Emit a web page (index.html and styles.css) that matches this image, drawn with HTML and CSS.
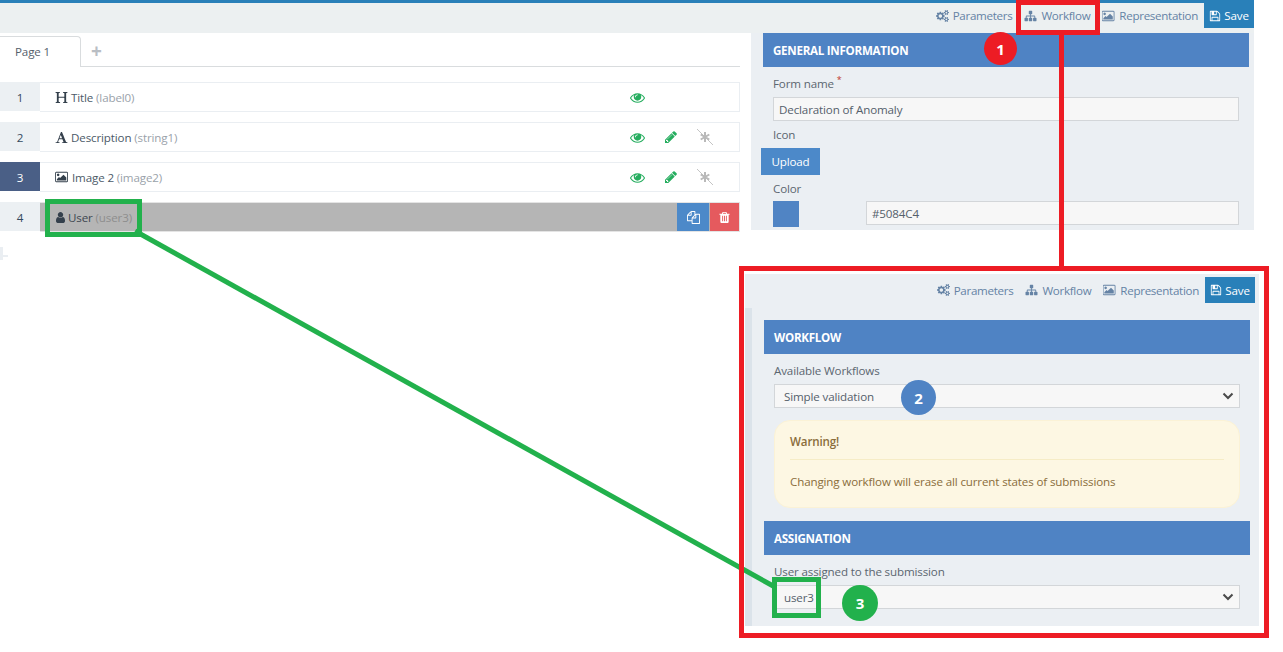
FILE: index.html
```html
<!DOCTYPE html>
<html lang="en">
<head>
<meta charset="utf-8">
<title>Form designer</title>
<link rel="stylesheet" href="styles.css">
</head>
<body>
<svg class="defs" width="0" height="0" aria-hidden="true">
  <symbol id="i-cogs" viewBox="0 0 1920 1792"><path d="M896 896q0-106-75-181t-181-75-181 75-75 181 75 181 181 75 181-75 75-181zm768 512q0-52-38-90t-90-38-90 38-38 90q0 53 37.5 90.5t90.5 37.5 90.5-37.5 37.5-90.5zm0-1024q0-52-38-90t-90-38-90 38-38 90q0 53 37.5 90.5t90.5 37.5 90.5-37.5 37.5-90.5zm-384 421v185q0 10-7 19.5t-16 10.5l-155 24q-11 35-32 76 34 48 90 115 7 11 7 20 0 12-7 19-23 30-82.5 89.5t-78.5 59.5q-11 0-21-7l-115-90q-37 19-77 31-11 108-23 155-7 24-30 24h-186q-11 0-20-7.5t-10-17.5l-23-153q-34-10-75-31l-118 89q-7 7-20 7-11 0-21-8-144-133-144-160 0-9 7-19 10-14 41-53t47-61q-23-44-35-82l-152-24q-10-1-17-9.5t-7-19.5v-185q0-10 7-19.5t16-10.5l155-24q11-35 32-76-34-48-90-115-7-11-7-20 0-12 7-20 22-30 82-89t79-59q11 0 21 7l115 90q34-18 77-32 11-108 23-154 7-24 30-24h186q11 0 20 7.5t10 17.5l23 153q34 10 75 31l118-89q8-7 20-7 11 0 21 8 144 133 144 160 0 8-7 19-12 16-42 54t-45 60q23 48 34 82l152 23q10 2 17 10.5t7 19.5zm640 533v140q0 16-149 31-12 27-30 52 51 113 51 138 0 4-4 7-122 71-124 71-8 0-46-47t-52-68q-20 2-30 2t-30-2q-14 21-52 68t-46 47q-2 0-124-71-4-3-4-7 0-25 51-138-18-25-30-52-149-15-149-31v-140q0-16 149-31 13-29 30-52-51-113-51-138 0-4 4-7 4-2 35-20t59-34 30-16q8 0 46 46.5t52 67.5q20-2 30-2t30 2q51-71 92-112l6-2q4 0 124 70 4 3 4 7 0 25-51 138 17 23 30 52 149 15 149 31zm0-1024v140q0 16-149 31-12 27-30 52 51 113 51 138 0 4-4 7-122 71-124 71-8 0-46-47t-52-68q-20 2-30 2t-30-2q-14 21-52 68t-46 47q-2 0-124-71-4-3-4-7 0-25 51-138-18-25-30-52-149-15-149-31v-140q0-16 149-31 13-29 30-52-51-113-51-138 0-4 4-7 4-2 35-20t59-34 30-16q8 0 46 46.5t52 67.5q20-2 30-2t30 2q51-71 92-112l6-2q4 0 124 70 4 3 4 7 0 25-51 138 17 23 30 52 149 15 149 31z"/></symbol>
  <symbol id="i-sitemap" viewBox="0 0 1792 1792"><path d="M1792 1248v320q0 40-28 68t-68 28h-320q-40 0-68-28t-28-68v-320q0-40 28-68t68-28h96v-192h-512v192h96q40 0 68 28t28 68v320q0 40-28 68t-68 28h-320q-40 0-68-28t-28-68v-320q0-40 28-68t68-28h96v-192h-512v192h96q40 0 68 28t28 68v320q0 40-28 68t-68 28h-320q-40 0-68-28t-28-68v-320q0-40 28-68t68-28h96v-192q0-52 38-90t90-38h512v-192h-96q-40 0-68-28t-28-68v-320q0-40 28-68t68-28h320q40 0 68 28t28 68v320q0 40-28 68t-68 28h-96v192h512q52 0 90 38t38 90v192h96q40 0 68 28t28 68z"/></symbol>
  <symbol id="i-picture" viewBox="0 0 1920 1792"><path d="M576 576q0 80-56 136t-136 56-136-56-56-136 56-136 136-56 136 56 56 136zm1024 384v448h-1408v-192l320-320 160 160 512-512zm96-704h-1600q-13 0-22.5 9.5t-9.5 22.5v1216q0 13 9.5 22.5t22.5 9.5h1600q13 0 22.5-9.5t9.5-22.5v-1216q0-13-9.5-22.5t-22.5-9.5zm160 32v1216q0 66-47 113t-113 47h-1600q-66 0-113-47t-47-113v-1216q0-66 47-113t113-47h1600q66 0 113 47t47 113z"/></symbol>
  <symbol id="i-save" viewBox="0 0 1792 1792"><path d="M512 1536h768v-384h-768v384zm896 0h128v-896q0-14-10-38.5t-20-34.5l-281-281q-10-10-34-20t-39-10v416q0 40-28 68t-68 28h-576q-40 0-68-28t-28-68v-416h-128v1280h128v-416q0-40 28-68t68-28h832q40 0 68 28t28 68v416zm-384-928v-320q0-13-9.5-22.5t-22.5-9.5h-192q-13 0-22.5 9.5t-9.5 22.5v320q0 13 9.5 22.5t22.5 9.5h192q13 0 22.5-9.5t9.5-22.5zm640 32v928q0 40-28 68t-68 28h-1344q-40 0-68-28t-28-68v-1344q0-40 28-68t68-28h928q40 0 88 20t76 48l280 280q28 28 48 76t20 88z"/></symbol>
  <symbol id="i-eye" viewBox="0 0 1792 1792"><path d="M1664 960q-152-236-381-353 61 104 61 225 0 185-131.5 316.5t-316.5 131.5-316.5-131.5-131.5-316.5q0-121 61-225-229 117-381 353 133 205 333.5 326.5t434.5 121.5 434.5-121.5 333.5-326.5zm-720-384q0-20-14-34t-34-14q-125 0-214.5 89.5t-89.5 214.5q0 20 14 34t34 14 34-14 14-34q0-86 61-147t147-61q20 0 34-14t14-34zm848 384q0 34-20 69-140 230-376.5 368.5t-499.5 138.5-499.5-139-376.5-368q-20-35-20-69t20-69q140-229 376.5-368t499.5-139 499.5 139 376.5 368q20 35 20 69z"/></symbol>
  <symbol id="i-pencil" viewBox="0 0 1792 1792"><path d="M491 1536l91-91-235-235-91 91v107h128v128h107zm523-928q0-22-22-22-10 0-17 7l-542 542q-7 7-7 17 0 22 22 22 10 0 17-7l542-542q7-7 7-17zm-54-192l416 416-832 832h-416v-416zm683 96q0 53-37 90l-166 166-416-416 166-165q36-38 90-38 53 0 91 38l235 234q37 39 37 91z"/></symbol>
  <symbol id="i-user" viewBox="256 128 1280 1536"><path d="M1536 1399q0 109-62.5 187t-150.5 78h-854q-88 0-150.5-78t-62.5-187q0-85 8.5-160.5t31.5-152 58.5-131 94-89 134.5-34.5q131 128 313 128t313-128q76 0 134.5 34.5t94 89 58.5 131 31.5 152 8.5 160.5zm-256-887q0 159-112.5 271.5t-271.5 112.5-271.5-112.5-112.5-271.5 112.5-271.5 271.5-112.5 271.5 112.5 112.5 271.5z"/></symbol>
  <symbol id="i-trash" viewBox="0 0 1792 1792"><path d="M704 1376v-704q0-14-9-23t-23-9h-64q-14 0-23 9t-9 23v704q0 14 9 23t23 9h64q14 0 23-9t9-23zm256 0v-704q0-14-9-23t-23-9h-64q-14 0-23 9t-9 23v704q0 14 9 23t23 9h64q14 0 23-9t9-23zm256 0v-704q0-14-9-23t-23-9h-64q-14 0-23 9t-9 23v704q0 14 9 23t23 9h64q14 0 23-9t9-23zm-544-992h448l-48-117q-7-9-17-11h-317q-10 2-17 11zm928 32v64q0 14-9 23t-23 9h-96v948q0 83-47 143.5t-113 60.5h-832q-66 0-113-58.5t-47-141.5v-952h-96q-14 0-23-9t-9-23v-64q0-14 9-23t23-9h309l70-167q15-37 54-63t79-26h320q40 0 79 26t54 63l70 167h309q14 0 23 9t9 23z"/></symbol>
  <symbol id="i-files" viewBox="0 0 1792 1792"><path d="M1696 384q40 0 68 28t28 68v1216q0 40-28 68t-68 28h-960q-40 0-68-28t-28-68v-288h-544q-40 0-68-28t-28-68v-672q0-40 20-88t48-76l408-408q28-28 76-48t88-20h416q40 0 68 28t28 68v328q68-40 128-40h416zm-544 213l-299 299h299v-299zm-640-384l-299 299h299v-299zm196 647l316-316v-416h-384v416q0 40-28 68t-68 28h-416v640h512v-256q0-40 20-88t48-76zm956 804v-1152h-384v416q0 40-28 68t-68 28h-416v640h896z"/></symbol>
  <symbol id="i-header" viewBox="0 0 1792 1792"><path d="M1682 1664q-44 0-132.500-3.500t-133.500-3.500q-44 0-132 3.500t-132 3.500q-24 0-37-20.500t-13-45.500q0-31 17-46t39-17 51-7 45-15q33-21 33-140l-1-391q0-21-1-31-13-4-50-4h-675q-38 0-51 4-1 10-1 31l-1 371q0 142 37 164 16 10 48 13t57 3.500 45 15 20 45.500q0 26-12.500 48t-36.500 22q-47 0-139.500-3.500t-138.500-3.500q-43 0-128 3.500t-127 3.500q-23 0-35.500-21t-12.500-45q0-30 15.500-45t36-17.500 47.500-7.500 42-15q33-23 33-143l-1-57v-813q0-3 .5-26t0-36.500-1.500-38.500-3.500-42-6.500-36.500-11-31.500-16-18q-15-10-45-12t-53-2-41-14-18-45q0-26 12-48t36-22q46 0 138.500 3.500t138.500 3.500q42 0 126.500-3.500t126.500-3.500q25 0 37.500 22t12.500 48q0 30-17 43.500t-38.500 14.500-49.500 4-43 13q-35 21-35 160l1 320q0 21 1 32 13 3 39 3h699q25 0 38-3 1-11 1-32l1-320q0-139-35-160-18-11-58.500-12.500t-66-13-25.500-49.500q0-26 12.500-48t37.500-22q44 0 132 3.500t132 3.500q43 0 129-3.500t129-3.500q25 0 37.500 22t12.500 48q0 30-17.500 44t-40 14.500-51.500 3-44 12.500q-35 23-35 161l1 943q0 119 34 140 16 10 46 13.500t53.500 4.500 41.500 15.500 18 44.500q0 26-12 48t-36 22z"/></symbol>
  <symbol id="i-font" viewBox="0 0 1792 1792"><path d="M789 559l-170 450q33 0 136.500 2t160.500 2q19 0 57-2-87-253-184-452zm-725 1105l2-79q23-7 56-12.500t57-10.500 49.500-14.500 44.500-29 31-50.500l237-616 280-724h128q8 14 11 21l205 480q33 78 106 257.500t114 274.500q15 34 58 144.500t72 168.500q20 45 35 57 19 15 88 29.500t84 20.500q6 38 6 57 0 5-.5 13.500t-.5 12.500q-63 0-190-8t-191-8q-76 0-215 7t-178 8q0-43 4-78l131-28q1 0 12.500-2.500t15.500-3.500 14.500-4.500 15-6.500 11-8 9-11 2.500-14q0-16-31-96.500t-72-177.500-42-100l-450-2q-26 58-76.500 195.500t-50.500 162.500q0 22 14 37.500t43.500 24.500 48.500 13.500 57 8.500 41 4q1 19 1 58 0 9-2 27-58 0-174.500-10t-174.500-10q-8 0-26.500 4t-21.500 4q-80 14-188 14z"/></symbol>
  <symbol id="i-chevron" viewBox="0 0 12 8"><path d="M1.500 1.500 6 6l4.500-4.500" fill="none" stroke="currentColor" stroke-width="2"/></symbol>
  <symbol id="i-noreq" viewBox="0 0 18 18"><path d="M1 1 17 17" stroke="#c4c4c4" stroke-width="1" fill="none"/><path d="M9 4V14M4.700 6.500 13.300 11.500M13.300 6.500 4.700 11.500" stroke="#b9b9b9" stroke-width="2" fill="none"/></symbol>
</svg>

<div class="app">
  <header class="toolbar">
    <a class="tool"><svg class="ico"><use href="#i-cogs"/></svg>Parameters</a>
    <a class="tool"><svg class="ico"><use href="#i-sitemap"/></svg>Workflow</a>
    <a class="tool"><svg class="ico"><use href="#i-picture"/></svg>Representation</a>
    <a class="save"><svg class="ico ico-save"><use href="#i-save"/></svg>Save</a>
  </header>

  <main class="main">
    <section class="designer">
      <nav class="tabs">
        <span class="tab">Page 1</span>
        <span class="tab-add">+</span>
      </nav>
      <ul class="rows">
        <li class="row">
          <span class="num">1</span>
          <div class="cell">
            <svg class="type"><use href="#i-header"/></svg><span>Title <em>(label0)</em></span>
            <span class="row-icons">
              <svg class="act act-eye"><use href="#i-eye"/></svg>
            </span>
          </div>
        </li>
        <li class="row">
          <span class="num">2</span>
          <div class="cell">
            <svg class="type"><use href="#i-font"/></svg><span>Description <em>(string1)</em></span>
            <span class="row-icons">
              <svg class="act act-eye"><use href="#i-eye"/></svg>
              <svg class="act act-pen"><use href="#i-pencil"/></svg>
              <svg class="act act-off"><use href="#i-noreq"/></svg>
            </span>
          </div>
        </li>
        <li class="row">
          <span class="num num-active">3</span>
          <div class="cell">
            <svg class="type type-image"><use href="#i-picture"/></svg><span>Image 2 <em>(image2)</em></span>
            <span class="row-icons">
              <svg class="act act-eye"><use href="#i-eye"/></svg>
              <svg class="act act-pen"><use href="#i-pencil"/></svg>
              <svg class="act act-off"><use href="#i-noreq"/></svg>
            </span>
          </div>
        </li>
        <li class="row row-selected">
          <span class="num">4</span>
          <div class="cell">
            <svg class="type type-user"><use href="#i-user"/></svg><span>User <em>(user3)</em></span>
            <span class="row-btns">
              <span class="rbtn rbtn-copy"><svg><use href="#i-files"/></svg></span>
              <span class="rbtn rbtn-del"><svg><use href="#i-trash"/></svg></span>
            </span>
          </div>
        </li>
      </ul>
      <div class="drop-mark"></div>
    </section>

    <aside class="side">
      <h2 class="band">General information</h2>
      <div class="form">
        <label class="lbl lbl-first">Form name <sup>*</sup></label>
        <input class="field" value="Declaration of Anomaly">
        <label class="lbl">Icon</label>
        <button class="upload">Upload</button>
        <label class="lbl">Color</label>
        <div class="color-row">
          <span class="swatch"></span>
          <input class="field" value="#5084C4">
        </div>
      </div>
    </aside>
  </main>
</div>

<section class="inset">
  <header class="toolbar toolbar-inset">
    <a class="tool"><svg class="ico"><use href="#i-cogs"/></svg>Parameters</a>
    <a class="tool"><svg class="ico"><use href="#i-sitemap"/></svg>Workflow</a>
    <a class="tool"><svg class="ico"><use href="#i-picture"/></svg>Representation</a>
    <a class="save"><svg class="ico ico-save"><use href="#i-save"/></svg>Save</a>
  </header>
  <div class="inset-body">
    <h2 class="band">Workflow</h2>
    <div class="form">
      <label class="lbl lbl-first">Available Workflows</label>
      <div class="select"><span>Simple validation</span><svg><use href="#i-chevron"/></svg></div>
      <div class="warning">
        <strong>Warning!</strong>
        <hr>
        <p>Changing workflow will erase all current states of submissions</p>
      </div>
    </div>
    <h2 class="band">Assignation</h2>
    <div class="form">
      <label class="lbl lbl-first">User assigned to the submission</label>
      <div class="select"><span>user3</span><svg><use href="#i-chevron"/></svg></div>
    </div>
  </div>
</section>

<svg class="lines" width="1283" height="652" aria-hidden="true">
  <path class="line-red" d="M1061.500 35V267"/>
  <path class="line-green" d="M135 231 775 587"/>
</svg>
<div class="mark mark-red mark-workflow"></div>
<div class="mark mark-red mark-inset"></div>
<div class="mark mark-green mark-user"></div>
<div class="mark mark-green mark-user3"></div>
<span class="step step-1">1</span>
<span class="step step-2">2</span>
<span class="step step-3">3</span>
</body>
</html>
```

FILE: styles.css
```css
* { box-sizing: border-box; }

html, body {
  margin: 0;
  padding: 0;
  height: 652px;
  overflow: hidden;
  background: #fff;
}

body {
  font-family: "Open Sans", "Noto Sans", sans-serif;
  font-size: 11.6px;
  letter-spacing: -0.14px;
  color: #55606b;
  position: relative;
}

.defs { position: absolute; }

svg { fill: currentColor; }

/* frame */
.app {
  width: 1254px;
  border-top: 3px solid #2980b9;
}

.toolbar {
  height: 30px;
  background: #ecf0f1;
  display: flex;
  justify-content: flex-end;
  align-items: flex-start;
}

.tool {
  display: flex;
  align-items: center;
  height: 25px;
  margin-right: 12px;
  color: #6583a5;
  letter-spacing: -0.3px;
  white-space: nowrap;
}

.ico {
  width: 13px;
  height: 12px;
  margin-right: 4px;
  flex: none;
}

.ico-save { width: 12px; margin-right: 3px; }

.save {
  display: flex;
  align-items: center;
  justify-content: center;
  width: 50px;
  height: 25px;
  margin-left: -6px;
  background: #2980b9;
  color: #fff;
}

.main { display: flex; align-items: flex-start; }

/* left column */
.designer { width: 751px; flex: none; }

.tabs {
  width: 740px;
  height: 34px;
  padding-top: 3px;
  display: flex;
  border-bottom: 1px solid #d9dcde;
}

.tab {
  width: 81px;
  height: 31px;
  padding-left: 15px;
  line-height: 29px;
  color: #55606b;
  background: #fff;
  border: 1px solid #d9dcde;
  border-width: 1px 1px 0 0;
  border-top-right-radius: 4px;
}

.tab-add {
  margin-left: 10px;
  font-size: 19px;
  font-weight: 700;
  line-height: 30px;
  color: #b9bec4;
}

.rows {
  list-style: none;
  margin: 15px 0 0;
  padding: 0;
  width: 740px;
}

.row {
  display: flex;
  height: 30px;
  margin-bottom: 10px;
}

.num {
  width: 40px;
  flex: none;
  text-align: center;
  line-height: 31px;
  background: #ecf0f3;
  color: #34495e;
  border-bottom: 1px solid #fff;
}

.num-active { background: #4a5f86; color: #fff; }

.cell {
  flex: 1;
  display: flex;
  align-items: center;
  padding-left: 15px;
  border: 1px solid #eaeef2;
  border-left: 0;
  color: #4c5a68;
  position: relative;
}

.cell em { font-style: normal; color: #9aa2aa; }

.type {
  width: 13px;
  height: 13px;
  margin-right: 3px;
  color: #34404c;
  flex: none;
}

.type-image { width: 14px; height: 12px; margin: 0 3px 0 0; }
.type-user { width: 9px; height: 11px; margin: 0 3px 0 1px; }

.row-icons {
  margin-left: auto;
  display: flex;
  align-items: center;
  width: 109px;
  flex: none;
}

.act { width: 15px; height: 15px; flex: none; }
.act-eye { color: #27ae60; margin-right: 19px; }
.act-pen { color: #27ae60; width: 14px; height: 14px; margin-right: 18px; }
.act-off { width: 18px; height: 18px; }

.row-selected .cell { background: #b5b5b5; border-color: #e4e4e4; color: #3d4650; }
.row-selected em { color: #8e8e8e; }

.row-btns { margin-left: auto; display: flex; height: 28px; }

.rbtn {
  width: 32px;
  display: flex;
  align-items: center;
  justify-content: center;
  color: #fff;
}

.rbtn svg { width: 13px; height: 13px; }
.rbtn-copy { background: #4c89c9; }
.rbtn-del { background: #e55a5e; margin-left: 1px; width: 29px; }

.drop-mark {
  width: 8px;
  height: 13px;
  margin-top: 15px;
  background:
    linear-gradient(#eaeef2, #eaeef2) 0 8px / 8px 2px no-repeat,
    linear-gradient(#eaeef2, #eaeef2) 0 0 / 3px 13px no-repeat;
}

/* right panel */
.side {
  width: 503px;
  height: 197px;
  flex: none;
  padding: 0 5px 0 12px;
  background: #ebeff3;
}

.band {
  margin: 0;
  height: 34px;
  padding-left: 10px;
  background: #4f83c4;
  color: #fff;
  font-size: 11.6px;
  font-weight: 700;
  letter-spacing: -0.28px;
  line-height: 35px;
  text-transform: uppercase;
}

.form { padding: 0 10px; display: flex; flex-direction: column; align-items: flex-start; }

.lbl {
  display: block;
  height: 17px;
  margin-top: 5px;
  line-height: 17px;
  color: #5b6670;
}

.lbl-first { margin-top: 8px; height: 22px; line-height: 17px; }

.lbl sup { color: #c0392b; font-size: 9px; line-height: 0; }

.field {
  display: block;
  width: 100%;
  height: 24px;
  padding: 0 5px;
  background: #f7f7f7;
  border: 1px solid #d3d6d9;
  font: inherit;
  letter-spacing: inherit;
  color: #55606b;
  outline: 0;
}

.upload {
  display: block;
  width: 59px;
  height: 27px;
  margin: 5px 0 0 -12px;
  padding: 0;
  border: 0;
  background: #4c89c9;
  color: #fff;
  font: inherit;
  letter-spacing: inherit;
}

.upload + .lbl { margin-top: 5px; }

.color-row {
  display: flex;
  width: 100%;
  justify-content: space-between;
  margin-top: 4px;
}

.swatch { width: 26px; height: 26px; background: #5084c4; flex: none; }
.color-row .field { width: 373px; }

/* inset screenshot */
.inset {
  position: absolute;
  left: 745px;
  top: 274px;
  width: 514px;
  height: 352px;
  background: #ebeff3;
}

.toolbar-inset {
  height: 34px;
  padding: 3px 4px 0 0;
  background: #ebeff3;
}

.toolbar-inset .tool { height: 26px; }
.toolbar-inset .save { height: 26px; }

.inset-body {
  height: 318px;
  padding: 12px 9px 0 12px;
  background: #ebeff3;
  border-left: 7px solid #dbe3ea;
}

.inset-body .form + .band { margin-top: 13px; }

.select {
  width: 100%;
  height: 24px;
  padding: 0 5px 0 9px;
  display: flex;
  align-items: center;
  justify-content: space-between;
  background: #f7f7f7;
  border: 1px solid #d3d6d9;
  color: #55606b;
}

.select svg { width: 12px; height: 8px; color: #4a4a4a; }

.warning {
  width: 100%;
  height: 88px;
  margin-top: 12px;
  padding: 13px 15px;
  background: #fdf7e3;
  border: 1px solid #fbf2d6;
  border-radius: 16px;
  color: #8a6d3b;
}

.warning strong { display: block; font-weight: 600; line-height: 16px; }
.warning hr { height: 1px; margin: 9px 0 14px; border: 0; background: #f6ecc6; }
.warning p { margin: 0; line-height: 16px; }

/* annotations */
.lines { position: absolute; left: 0; top: 0; pointer-events: none; }
.line-red { stroke: #ed1c24; stroke-width: 5; fill: none; }
.line-green { stroke: #22b14c; stroke-width: 5; fill: none; }

.mark { position: absolute; border-style: solid; border-width: 5px; }
.mark-red { border-color: #ed1c24; }
.mark-green { border-color: #22b14c; }
.mark-workflow { left: 1016px; top: 0; width: 84px; height: 35px; }
.mark-inset { left: 739px; top: 266px; width: 530px; height: 372px; }
.mark-user { left: 45px; top: 199px; width: 97px; height: 38px; }
.mark-user3 { left: 772px; top: 577px; width: 49px; height: 41px; }

.step {
  position: absolute;
  display: flex;
  align-items: center;
  justify-content: center;
  border-radius: 50%;
  color: #fff;
  font-size: 15px;
  font-weight: 700;
  letter-spacing: 0;
}

.step-1 { left: 984px; top: 32px; width: 33px; height: 33px; background: #ed1c24; }
.step-2 { left: 901px; top: 380px; width: 35px; height: 35px; background: #4f83c4; }
.step-3 { left: 842px; top: 585px; width: 36px; height: 36px; background: #22b14c; }
```
